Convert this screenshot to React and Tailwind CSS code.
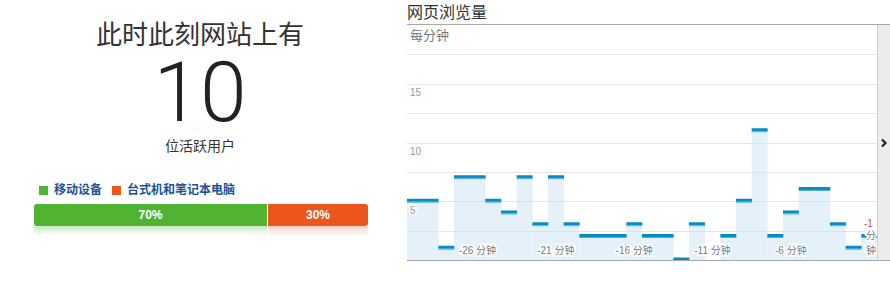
import React from "react";

const values = [5, 5, 1, 7, 7, 5, 4, 7, 3, 7, 3, 2, 2, 2, 3, 2, 2, 0, 3, null, 2, 5, 11, 2, 4, 6, 6, 3, 1, 2];
const W = 470;
const H = 235;
const colW = W / 30;
const unit = H / 20;
const yOf = (v) => H - v * unit;

const xLabels = [
  { col: 4, text: "-26 分钟" },
  { col: 9, text: "-21 分钟" },
  { col: 14, text: "-16 分钟" },
  { col: 19, text: "-11 分钟" },
  { col: 24, text: "-6 分钟" },
];

const font = "Liberation Sans, Noto Sans CJK SC, sans-serif";

const Chart = () => {
  const grid = [1, 2, 3, 4, 5, 6, 7].map((k) => Math.round(k * 2.5 * unit) + 0.5);
  return (
    <svg width={W} height={H} className="block shrink-0">
      {values.map((v, i) =>
        v === null ? null : (
          <rect key={`f-${i}`} x={i * colW} y={yOf(v)} width={colW + 0.3} height={H - yOf(v)} fill="#e4f1f9" />
        )
      )}
      {grid.map((y, i) => (
        <line key={`g-${i}`} x1={0} x2={W} y1={y} y2={y} stroke="#dcdcdc" strokeOpacity="0.7" strokeWidth="1" />
      ))}
      {values.map((v, i) =>
        v === null ? null : (
          <g key={`l-${i}`}>
            <rect x={i * colW} y={yOf(v) - 2.5} width={colW + 0.3} height={3} fill="#058dc7" />
            <rect x={i * colW} y={yOf(v) + 0.5} width={colW + 0.3} height={1} fill="#5aafda" />
          </g>
        )
      )}
      <text x={3} y={15} fontSize="13" fill="#777" fontFamily={font}>每分钟</text>
      {[["15", 59], ["10", 117.5], ["5", 176.5]].map(([t, y]) => (
        <text key={t} x={3} y={y + 12} fontSize="10" fill="#999" fontFamily={font} stroke="#fff" strokeWidth="3" paintOrder="stroke">
          {t}
        </text>
      ))}
      {xLabels.map((l) => (
        <text
          key={l.text}
          x={(l.col + 0.5) * colW}
          y={228.5}
          fontSize="10"
          textAnchor="middle"
          fill="#6f7c88"
          fontFamily={font}
          stroke="#fff"
          strokeWidth="3"
          paintOrder="stroke"
        >
          {l.text}
        </text>
      ))}
      <g fontSize="10" fill="#6f7c88" fontFamily={font} stroke="#fff" strokeWidth="3" paintOrder="stroke">
        <text x={457} y={201.5} fill="#c0507a">-1</text>
        <text x={459} y={214}>分</text>
        <text x={459} y={229}>钟</text>
      </g>
    </svg>
  );
};

export default function App() {
  return (
    <div className="flex w-[890px] h-[293px] bg-white font-['Liberation_Sans','Noto_Sans_CJK_SC',sans-serif]">
      <div className="w-[400px] flex flex-col items-center">
        <div className="mt-[18px] text-[26px] leading-[30px] text-[#333] font-['Noto_Sans_CJK_SC',sans-serif]">
          此时此刻网站上有
        </div>
        <div className="mt-[9px] text-[84px] leading-[72px] font-light text-[#222] font-['Roboto',sans-serif]">
          10
        </div>
        <div className="mt-[6px] text-[14px] leading-[20px] text-[#333] font-['Noto_Sans_CJK_SC',sans-serif]">
          位活跃用户
        </div>
        <div className="w-full pl-[34px] pr-[32px] mt-[27px]">
          <div className="flex items-center pl-[5px] h-[16px] text-[12px] font-bold text-[#1d5296]">
            <span className="w-[9px] h-[9px] bg-[#50b432]" />
            <span className="ml-[6px]">移动设备</span>
            <span className="ml-[10px] w-[9px] h-[9px] bg-[#ed561b]" />
            <span className="ml-[6px]">台式机和笔记本电脑</span>
          </div>
          <div className="mt-[6px] flex h-[22px] rounded-[3px] overflow-hidden text-white text-[12px] font-bold">
            <div className="w-[233px] bg-[#50b432] flex items-center justify-center">70%</div>
            <div className="w-px bg-white" />
            <div className="flex-1 bg-[#ed561b] flex items-center justify-center">30%</div>
          </div>
          <div className="flex h-[10px]">
            <div className="w-[233px] bg-linear-to-b from-[#50b432]/30 to-white/0" />
            <div className="w-px" />
            <div className="flex-1 bg-linear-to-b from-[#ed561b]/25 to-white/0" />
          </div>
        </div>
      </div>
      <div className="ml-[7px] w-[483px]">
        <div className="h-[24px] text-[16px] leading-[23px] text-[#333] font-['Noto_Sans_CJK_SC',sans-serif]">
          网页浏览量
        </div>
        <div className="flex h-[237px] border-t border-b border-[#a8a8a8]">
          <Chart />
          <div className="flex-1 bg-[#ececec] border-l border-[#d2d2d2] flex items-center justify-center">
            <svg width="8" height="10" viewBox="0 0 8 10">
              <path d="M2 1.5 L5.5 5 L2 8.5" fill="none" stroke="#222" strokeWidth="2.2" />
            </svg>
          </div>
        </div>
      </div>
    </div>
  );
}
